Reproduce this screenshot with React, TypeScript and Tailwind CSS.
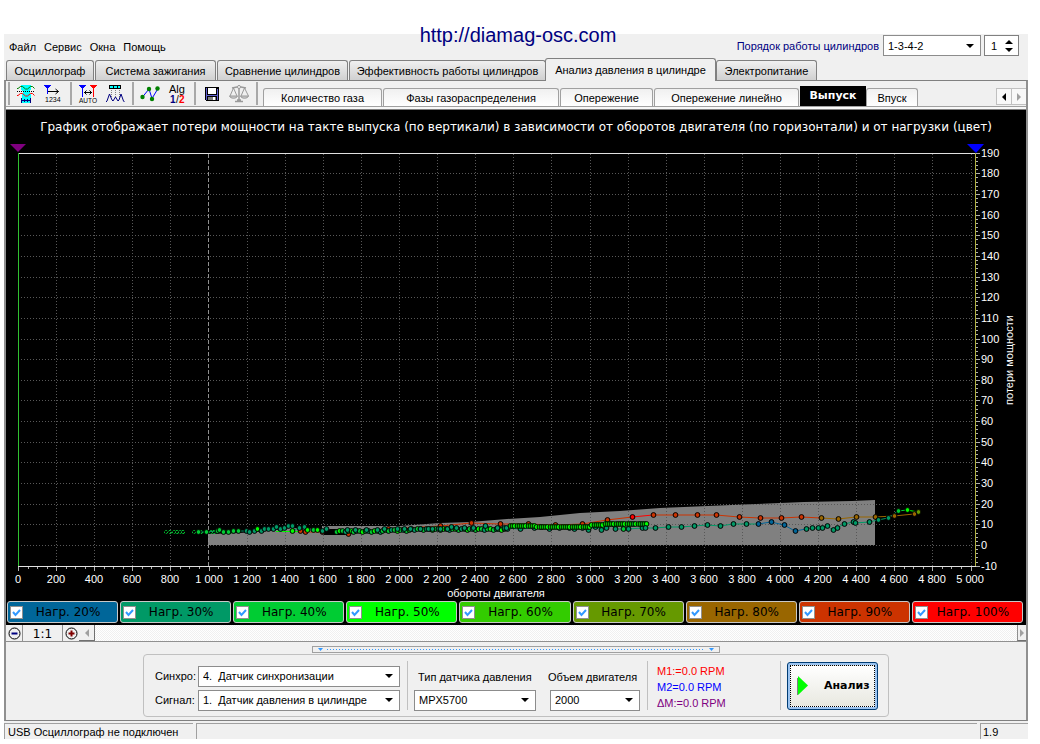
import React, { useState } from "react";

const MENU = ["Файл", "Сервис", "Окна", "Помощь"];

const TABS = [
  { label: "Осциллограф", width: "w-[88px]" },
  { label: "Система зажигания", width: "w-[121px]" },
  { label: "Сравнение цилиндров", width: "w-[131px]" },
  { label: "Эффективность работы цилиндров", width: "w-[197px]" },
  { label: "Анализ давления в цилиндре", width: "w-[171px]", active: true },
  { label: "Электропитание", width: "w-[101px]" },
];

const SUB_TABS = [
  { label: "Количество газа", width: "w-[119px]" },
  { label: "Фазы газораспределения", width: "w-[176px]" },
  { label: "Опережение", width: "w-[93px]" },
  { label: "Опережение линейно", width: "w-[145px]" },
  { label: "Выпуск", width: "w-[66px]", active: true },
  { label: "Впуск", width: "w-[52px]" },
];

const LOADS = [
  { label: "Нагр. 20%", color: "bg-[#006699]" },
  { label: "Нагр. 30%", color: "bg-[#009966]" },
  { label: "Нагр. 40%", color: "bg-[#00cc33]" },
  { label: "Нагр. 50%", color: "bg-[#00ff00]" },
  { label: "Нагр. 60%", color: "bg-[#33cc00]" },
  { label: "Нагр. 70%", color: "bg-[#669900]" },
  { label: "Нагр. 80%", color: "bg-[#996600]" },
  { label: "Нагр. 90%", color: "bg-[#cc3300]" },
  { label: "Нагр. 100%", color: "bg-[#ff0000]" },
];

/* ---------- toolbar icons ---------- */

function SyncIcon() {
  return (
    <svg width="20" height="20" viewBox="0 0 20 20" fill="none">
      <path d="M5 1h10v4l-1 3 1 4v7H6v-7l1-4-2-3z" fill="#00ffff" shapeRendering="crispEdges" />
      <path d="M1 4.500h1l2.500-2h2l3 2.500h2l3-2.500h2l2 2" stroke="#008000" />
      <path d="M1 11.500h1l2.500-2h2l3 2.500h2l3-2.500h2l2 2" stroke="#ff0000" />
      <path d="M1 7.500h18" stroke="#000" strokeDasharray="1 1" shapeRendering="crispEdges" />
      <path d="M5.500 14v5M14.500 14v5M6 16.500h8M8.500 15v3M11.500 15v3" stroke="#000080" shapeRendering="crispEdges" />
    </svg>
  );
}

function NumberIcon() {
  return (
    <svg width="20" height="20" viewBox="0 0 20 20" fill="none">
      <path d="M1 1h7L5 5v5H4V5z" fill="#0000ff" shapeRendering="crispEdges" />
      <path d="M5 7.500h10.500M12.500 5l3 2.500-3 2.500" stroke="#000" />
      <text x="2" y="18" fontSize="7" fill="#000" fontFamily="Liberation Sans, sans-serif">1234</text>
    </svg>
  );
}

function AutoIcon() {
  return (
    <svg width="20" height="20" viewBox="0 0 20 20" fill="none">
      <path d="M1 1h7L5 5v8H4V5z" fill="#0000ff" shapeRendering="crispEdges" />
      <path d="M12 1h7l-3 4v8h-1V5z" fill="#ff0000" shapeRendering="crispEdges" />
      <path d="M6 8.500h8M8.500 6.500l-2 2 2 2M11.500 6.500l2 2-2 2" stroke="#000" />
      <text x="1" y="19" fontSize="6.500" fill="#000" fontFamily="Liberation Sans, sans-serif">AUTO</text>
    </svg>
  );
}

function PulseIcon() {
  return (
    <svg width="20" height="20" viewBox="0 0 20 20" fill="none">
      <path d="M4.500 1.500h11v3h-11z" fill="#00ffff" stroke="#000" shapeRendering="crispEdges" />
      <path d="M8.500 2v2M12.500 2v2" stroke="#000" shapeRendering="crispEdges" />
      <path d="M6.500 6v7M10.500 6v7M14.500 6v7" stroke="#808080" strokeDasharray="1 1" />
      <path d="M1 18l1-1 2.500-7L7 16l1 1 2.500-4 2.500 4 1-1 2-6 2.500 7 1 1" stroke="#000080" />
    </svg>
  );
}

function TrendIcon() {
  return (
    <svg width="20" height="20" viewBox="0 0 20 20">
      <path d="M2.500 13L9 5l3 9.500 6-10" fill="none" stroke="#0000ff" />
      <circle cx="2.500" cy="13" r="2.200" fill="#008000" />
      <circle cx="9" cy="5" r="2.200" fill="#008000" />
      <circle cx="12" cy="15" r="2.200" fill="#008000" />
      <circle cx="17.500" cy="4.500" r="2.200" fill="#008000" />
    </svg>
  );
}

function AlgIcon() {
  return (
    <svg width="20" height="22" viewBox="0 0 20 22" fontFamily="Liberation Sans, sans-serif">
      <text x="2" y="10" fontSize="11" fill="#000">Alg</text>
      <text x="3" y="20" fontSize="10" fontWeight="bold" fill="#000080">1</text>
      <text x="9" y="20" fontSize="10" fill="#000">/</text>
      <text x="12" y="20" fontSize="10" fontWeight="bold" fill="#ff0000">2</text>
    </svg>
  );
}

function SaveIcon() {
  return (
    <svg width="16" height="16" viewBox="0 0 16 16" shapeRendering="crispEdges">
      <path d="M1 1h14v14H2l-1-1z" fill="#000" />
      <path d="M2 2h1v12H2zM13 3h1v11h-1zM3 9h10v1H3z" fill="#6060d0" />
      <path d="M4 2h8v6H4z" fill="#fff" />
      <path d="M4 11h8v3H4z" fill="#808080" />
      <path d="M9 11h2v3H9z" fill="#fff" />
    </svg>
  );
}

function ScalesIcon() {
  return (
    <svg width="20" height="20" viewBox="0 0 20 20" fill="none" stroke="#9a9a9a">
      <path d="M10 1v15M3 4l5-1h4l5 1M6 17.500h8M8 16h4" strokeWidth="1.500" />
      <path d="M4.500 4L1 12M4.500 4L8 12M15.500 4L12 12M15.500 4l4 8" />
      <path d="M.5 12h8c-1 3-7 3-8 0zM11.500 12h8c-1 3-7 3-8 0z" fill="#c8c8c8" />
      <circle cx="10" cy="3" r="1.500" fill="#fff" />
    </svg>
  );
}

const TOOL_GROUPS = [
  [
    { name: "Синхронизация", icon: <SyncIcon /> },
    { name: "Нумерация", icon: <NumberIcon /> },
  ],
  [
    { name: "Авто", icon: <AutoIcon /> },
    { name: "Импульсы", icon: <PulseIcon /> },
  ],
  [
    { name: "Тренд", icon: <TrendIcon /> },
    { name: "Алгоритм", icon: <AlgIcon /> },
  ],
  [
    { name: "Сохранить", icon: <SaveIcon /> },
    { name: "Сравнить", icon: <ScalesIcon /> },
  ],
];

/* ---------- chart ---------- */

const C20 = "#006699";
const C30 = "#009966";
const C40 = "#00cc33";
const C50 = "#00ff00";
const C70 = "#669900";
const C80 = "#996600";
const C90 = "#cc3300";
const C100 = "#ff0000";

type Dot = [number, number, string];

const px = (rpm: number) => Math.round(18 + rpm * 0.1905);
const py = (loss: number) => Math.round(545 - loss * 2.065);
const spaced = (n: number) => (n >= 1000 ? `${Math.floor(n / 1000)} ${String(n % 1000).padStart(3, "0")}` : String(n));

const RPM = Array.from({ length: 26 }, (_, i) => i * 200);
const LOSS = Array.from({ length: 21 }, (_, i) => i * 10 - 10);

const HIGH: Dot[] = [
  [300, 531, C90], [305, 532, C90], [322, 532, C90], [348, 534, C90], [388, 529, C90], [440, 526, C90],
  [471, 523, C90], [500, 524, C90], [528, 524, C90], [555, 525, C90], [582, 524, C90], [607, 520, C90],
  [632, 517, C100], [653, 515, C90], [675, 515, C90], [697, 515, C90], [716, 515, C90], [739, 517, C90],
  [760, 518, C90], [781, 518, C90], [801, 517, C90], [821, 518, C80], [838, 519, C80], [856, 517, C80],
  [875, 517, C80], [894, 516, C80], [914, 514, C80], [918, 512, C70],
];

const LOW: Dot[] = [
  [645, 528, C30], [655, 528, C30], [668, 527, C30], [681, 527, C30], [694, 526, C30], [707, 525, C30],
  [720, 526, C30], [733, 524, C30], [746, 524, C30], [758, 524, C20], [771, 522, C20], [784, 525, C20],
  [795, 531, C20], [806, 529, C30], [812, 528, C30], [818, 528, C30], [822, 528, C30], [827, 526, C30],
  [833, 530, C30], [837, 528, C30], [844, 524, C30], [853, 522, C30], [855, 523, C30], [869, 522, C30],
  [878, 520, C30], [888, 518, C30], [898, 511, C40], [907, 510, C50], [918, 512, C70],
];

const START: Dot[] = [
  [198, 532, C40], [206, 532, C40], [217, 531, C40], [219, 530, C40], [223, 532, C40], [228, 532, C40],
  [233, 531, C40], [238, 531, C40], [246, 531, C30], [249, 532, C30], [254, 531, C30], [257, 529, C50],
  [261, 531, C30], [264, 529, C30], [268, 529, C30], [273, 529, C30], [276, 527, C30], [280, 529, C30],
  [284, 528, C30], [288, 526, C30], [292, 526, C30], [292, 531, C50], [299, 528, C30], [304, 527, C30],
  [307, 530, C50], [313, 530, C40], [317, 530, C50], [322, 531, C30], [326, 529, C30],
];

const SPARSE = [166, 170, 174, 177, 180, 183, 194, 201, 211, 214, 226, 230];

const TEAL: Dot[] = [
  347, 355, 366, 377, 384, 397, 404, 410, 420, 428, 432, 440, 447, 451, 456, 464, 473, 485, 497, 504,
].map((x, i) => [x, Math.round(530 - (x - 347) * 0.014) - (x > 430 && i % 4 === 1 ? 2 : 0), C30] as Dot);

const TEAL_LOW: Dot[] = [
  [506, 528, C30], [520, 529, C30], [534, 528, C30], [541, 527, C30], [549, 529, C30], [559, 528, C30],
  [569, 528, C30], [574, 529, C30], [582, 528, C30], [588, 530, C30], [595, 527, C30], [601, 530, C30],
  [606, 528, C30], [614, 525, C30], [615, 529, C30], [623, 529, C40], [628, 529, C30], [642, 528, C30],
];

const BAND: Dot[] = Array.from({ length: 60 }, (_, i) => {
  const x = 336 + Math.round(i * 2.9);
  const y = x < 385 ? 531 : x < 410 ? 530 : 529;
  return [x, y + (i % 3 === 0 ? 1 : 0), i % 4 === 1 ? C50 : i % 4 === 3 ? C30 : C40] as Dot;
});

const DENSE: Dot[] = Array.from({ length: 63 }, (_, i) => {
  const x = 510 + Math.round(i * 2.2);
  const y = x < 535 ? 526 : x < 560 ? 527 : x < 590 ? 527 : x < 605 ? 525 : 524;
  return [x, y, x > 624 && i % 4 === 0 ? C40 : C50] as Dot;
});

const line = (dots: Dot[]) => dots.map(([x, y]) => `${x},${y}`).join(" ");

const colored = (dots: Dot[], key: string) =>
  dots.slice(1).map((d, i) => (
    <line key={`${key}${i}`} x1={dots[i][0]} y1={dots[i][1]} x2={d[0]} y2={d[1]} stroke={dots[i][2]} />
  ));

function Dots({ dots }: { dots: Dot[] }) {
  return (
    <>
      {dots.map(([x, y, color], i) => (
        <circle key={i} cx={x + 0.5} cy={y} r="2.400" fill={color} stroke="#000" strokeWidth="1" />
      ))}
    </>
  );
}

function Chart() {
  return (
    <svg
      viewBox="6 140 1020 460"
      className="block h-auto w-full"
      role="img"
      aria-label="Потери мощности от оборотов двигателя"
      fontFamily="Liberation Sans, Arial, sans-serif"
      fontSize="11"
    >
      <path
        d="M208 545V534L240 533L268 531L290 528L322 529V526H400L440 523L470 522L507 519L540 517L580 513L620 511L660 508L708 506L756 504L804 502L852 501L875 500V545Z"
        fill="#808080"
      />
      <g stroke="#585858" strokeDasharray="1 2" shapeRendering="crispEdges">
        {RPM.slice(1).filter((v) => v !== 1000).map((v) => (
          <line key={v} x1={px(v) + 0.5} x2={px(v) + 0.5} y1="154" y2="566" />
        ))}
        {LOSS.slice(1, -1).map((v) => (
          <line key={v} x1="18" x2="975" y1={py(v) + 0.5} y2={py(v) + 0.5} />
        ))}
      </g>
      <line x1="208.500" x2="208.500" y1="154" y2="566" stroke="#909090" strokeDasharray="4 2" shapeRendering="crispEdges" />

      <g shapeRendering="crispEdges" stroke="#e0e0e0">
        <path d="M18 153.500H980M18 566.500H980" />
        {Array.from({ length: 101 }, (_, i) => i * 50).map((v) => (
          <line key={v} x1={px(v) + 0.5} x2={px(v) + 0.5} y1="567" y2={v % 200 === 0 ? 571 : 569} stroke="#b0b0b0" />
        ))}
        {Array.from({ length: 101 }, (_, i) => i * 2 - 10).map((v) => (
          <line key={v} x1="976" x2={v % 10 === 0 ? 980 : 978} y1={py(v) + 0.5} y2={py(v) + 0.5} stroke="#b0b0b0" />
        ))}
      </g>
      <path d="M18.500 153V566" stroke="#30c030" shapeRendering="crispEdges" />
      <path d="M975.500 153V566" stroke="#b0b040" shapeRendering="crispEdges" />
      <path d="M10 144h16l-8 8z" fill="#800080" />
      <path d="M967 144h17l-8 9z" fill="#0000ff" />

      {colored(HIGH, "h")}
      {colored(LOW, "l")}
      <polyline points={line(START)} fill="none" stroke={C30} />
      <path d="M276 531.500H310" stroke={C50} />
      <path d="M324 531l6-2h8l8 2v4h-22z" fill="#000" />
      {SPARSE.map((x, i) => (
        <circle key={x} cx={x} cy="532" r="1.600" fill="none" stroke={C40} strokeWidth="1" strokeDasharray={i % 2 ? "3 2" : "2 1"} />
      ))}
      <Dots dots={HIGH} />
      <Dots dots={START} />
      <Dots dots={BAND} />
      <Dots dots={TEAL} />
      <polyline points={line(TEAL_LOW)} fill="none" stroke={C30} />
      <Dots dots={TEAL_LOW} />
      <Dots dots={DENSE} />
      <Dots dots={LOW} />

      <g fill="#fff">
        {RPM.map((v) => (
          <text key={v} x={px(v) - (v === 5000 ? 1 : 0)} y="583" textAnchor="middle">
            {spaced(v)}
          </text>
        ))}
        {LOSS.map((v) => (
          <text key={v} x="981" y={py(v) + 4}>
            {v}
          </text>
        ))}
        <text x="496" y="597" textAnchor="middle">обороты двигателя</text>
        <text x="1013" y="360" textAnchor="middle" transform="rotate(-90 1013 360)">потери мощности</text>
      </g>
    </svg>
  );
}

/* ---------- controls ---------- */

function Dropdown({ id, value, className }: { id: string; value: string; className: string }) {
  return (
    <div className={`grid h-[21px] items-center border border-[#8c8c8c] bg-white ${className}`}>
      <select id={id} defaultValue={value} className="h-[19px] w-full appearance-none bg-transparent pr-4 pl-1 text-[11px] [grid-area:1/1]">
        <option value={value}>{value}</option>
      </select>
      <svg width="8" height="4" viewBox="0 0 8 4" className="pointer-events-none mr-[6px] justify-self-end [grid-area:1/1]">
        <path d="M0 0h8L4 4z" fill="#000" />
      </svg>
    </div>
  );
}

function LoadToggle({ label, color }: { label: string; color: string }) {
  const [on, setOn] = useState(true);
  return (
    <label className={`flex h-[22px] items-center rounded-[3px] border border-[#c8c8c8] pl-[2px] text-black ${color}`}>
      <span className="grid h-[13px] w-[13px] shrink-0 border border-[#909090] bg-white">
        <input type="checkbox" checked={on} onChange={() => setOn(!on)} className="h-full w-full appearance-none [grid-area:1/1]" />
        {on && (
          <svg viewBox="0 0 11 11" className="pointer-events-none h-[11px] w-[11px] [grid-area:1/1]">
            <path d="M2 5l2.500 3L9 3" fill="none" stroke="#3399ff" strokeWidth="2" />
          </svg>
        )}
      </span>
      <span className="grow pr-1 text-center font-['DejaVu_Sans',Verdana,sans-serif] text-xs leading-5 whitespace-nowrap">{label}</span>
    </label>
  );
}

export default function App() {
  return (
    <div className="relative min-h-screen bg-white pt-[34px] pr-3 pl-1 font-['Liberation_Sans',Arial,sans-serif] text-[11px] leading-4 text-black">
      <div className="pointer-events-none absolute inset-x-0 top-[23px] z-20 pr-1 text-center">
        <a href="http://diamag-osc.com" className="pointer-events-auto text-xl leading-6 text-[#000080]">
          http://diamag-osc.com
        </a>
      </div>
      <div className="bg-[#f0f0f0]">
        <header className="flex h-6 items-start justify-between pr-[9px] pl-[5px]">
          <nav className="flex gap-2 pt-[5px]">
            {MENU.map((m) => (
              <button key={m} type="button">{m}</button>
            ))}
          </nav>
          <div className="flex items-center pt-px">
            <label htmlFor="order" className="mr-1 text-[#000080]">Порядок работы цилиндров</label>
            <Dropdown id="order" value="1-3-4-2" className="mr-[3px] w-[98px]" />
            <div className="flex h-[21px] w-[35px] items-center border border-[#808080] bg-white">
              <input aria-label="Цилиндр" defaultValue="1" className="w-5 pl-[6px] text-[11px] outline-none" />
              <span className="flex flex-col gap-1">
                <button type="button" aria-label="Больше">
                  <svg width="8" height="4" viewBox="0 0 8 4" className="block"><path d="M0 4h8L4 0z" /></svg>
                </button>
                <button type="button" aria-label="Меньше">
                  <svg width="8" height="4" viewBox="0 0 8 4" className="block"><path d="M0 0h8L4 4z" /></svg>
                </button>
              </span>
            </div>
          </div>
        </header>

        <div role="tablist" className="flex h-[22px] items-end pl-[2px]">
          {TABS.map((t) => (
            <button
              key={t.label}
              type="button"
              role="tab"
              aria-selected={!!t.active}
              className={
                t.active
                  ? `relative z-10 -mb-px -ml-[2px] h-[23px] rounded-t-[3px] border border-b-0 border-[#808080] bg-[#f0f0f0] whitespace-nowrap ${t.width}`
                  : `mr-px h-5 rounded-t-[3px] border border-b-0 border-[#808080] bg-linear-to-b from-[#f0f0f0] to-[#d0d0d0] whitespace-nowrap ${t.width}`
              }
            >
              {t.label}
            </button>
          ))}
        </div>

        <main className="border-x-2 border-y border-x-[#909090] border-y-[#808080]">
          <div className="flex h-[25px] items-end">
            <div className="flex h-full shrink-0 items-center pl-[2px]">
              {TOOL_GROUPS.map((group, i) => (
                <div key={i} className="flex h-[23px] w-[62px] items-center border-l-2 border-[#a8a8a8] pl-[2px]">
                  {group.map((tool) => (
                    <button key={tool.name} type="button" title={tool.name} className="grid h-[22px] w-[27px] place-items-center">
                      {tool.icon}
                    </button>
                  ))}
                </div>
              ))}
              <div className="mr-[5px] h-[23px] border-l-2 border-[#a8a8a8]" />
            </div>
            <div role="tablist" className="flex h-full grow items-end">
              {SUB_TABS.map((t) => (
                <button
                  key={t.label}
                  type="button"
                  role="tab"
                  aria-selected={!!t.active}
                  className={
                    t.active
                      ? `h-[20px] bg-black font-['DejaVu_Sans',Verdana,sans-serif] font-bold text-white ${t.width}`
                      : `mr-px h-[18px] rounded-t-[3px] border border-b-0 border-[#a0a0a0] bg-linear-to-b from-[#f0f0f0] to-white whitespace-nowrap ${t.width}`
                  }
                >
                  {t.label}
                </button>
              ))}
            </div>
            <div className="mb-px flex h-[17px] w-[30px] shrink-0 border border-r-0 border-[#c0c0c0] bg-[#f8f8f8]">
              <button type="button" aria-label="Назад" className="grid grow place-items-center border-r border-[#c0c0c0]">
                <svg width="4" height="8" viewBox="0 0 4 8"><path d="M4 0v8L0 4z" /></svg>
              </button>
              <button type="button" aria-label="Вперёд" className="grid grow place-items-center">
                <svg width="4" height="8" viewBox="0 0 4 8"><path d="M0 0v8l4-4z" fill="#a0a0a0" /></svg>
              </button>
            </div>
          </div>
          <div className="h-1 border-t border-b border-t-[#a0a0a0] border-b-[#808080] bg-[#f8f8f8]" />

          <section className="bg-black">
            <h1 className="h-[30px] pt-2 text-center font-['DejaVu_Sans',Verdana,sans-serif] text-xs leading-[18px] whitespace-nowrap text-white">
              График отображает потери мощности на такте выпуска (по вертикали) в зависимости от оборотов двигателя (по горизонтали) и от нагрузки (цвет)
            </h1>
            <Chart />
            <div className="grid grid-cols-9 gap-[2px] pt-px pr-[3px] pb-[2px] pl-px">
              {LOADS.map((l) => (
                <LoadToggle key={l.label} {...l} />
              ))}
            </div>
          </section>

          <div className="flex h-[17px] border-b border-[#909090] bg-[repeating-conic-gradient(#f0f0f0_0_25%,#ffffff_0_50%)] bg-[length:2px_2px]">
            <button type="button" aria-label="Уменьшить" className="grid w-[17px] place-items-center border-r border-[#909090] bg-[#f0f0f0]">
              <svg width="13" height="13" viewBox="0 0 13 13" fill="none"><circle cx="6.500" cy="6.500" r="5.500" stroke="#000" /><path d="M3.500 6.500h6" stroke="#000080" strokeWidth="2" /></svg>
            </button>
            <button type="button" className="w-[40px] border-r border-[#909090] bg-[#f0f0f0] pt-px font-['DejaVu_Sans',Verdana,sans-serif] text-xs">1:1</button>
            <button type="button" aria-label="Увеличить" className="grid w-4 place-items-center bg-[#f0f0f0]">
              <svg width="13" height="13" viewBox="0 0 13 13" fill="none"><circle cx="6.500" cy="6.500" r="5.500" stroke="#000" /><path d="M3.500 6.500h6M6.500 3.500v6" stroke="#800000" strokeWidth="2" /></svg>
            </button>
            <button type="button" aria-label="Влево" className="grid w-4 place-items-center border-r border-b border-[#707070] bg-[#f0f0f0]">
              <svg width="4" height="8" viewBox="0 0 4 8"><path d="M4 0v8L0 4z" fill="#a0a0a0" /></svg>
            </button>
            <button type="button" aria-label="Вправо" className="ml-auto grid w-[9px] place-items-center border-b border-l border-[#909090] border-b-[#707070] bg-[#f0f0f0]">
              <svg width="4" height="8" viewBox="0 0 4 8"><path d="M0 0v8l4-4z" fill="#a0a0a0" /></svg>
            </button>
          </div>

          <div className="mx-auto mt-1 flex h-[7px] w-[408px] items-center gap-1 border border-[#a0a0a0] px-[5px]">
            <svg width="5" height="3" viewBox="0 0 5 3"><path d="M0 0h5L2.500 3z" fill="#3399ff" /></svg>
            <span className="h-px grow bg-[repeating-linear-gradient(90deg,#3399ff_0_1px,transparent_1px_3px)]" />
            <svg width="5" height="3" viewBox="0 0 5 3"><path d="M0 0h5L2.500 3z" fill="#3399ff" /></svg>
          </div>

          <section className="mx-auto mt-px mb-[3px] flex h-[63px] w-[746px] items-center rounded-[4px] border border-[#c0c0c0] pl-[11px]">
            <div className="grid w-[245px] grid-cols-[43px_202px] items-center gap-y-[3px] pt-[5px]">
              <label htmlFor="sync">Синхро:</label>
              <Dropdown id="sync" value={"4.\u00a0\u00a0Датчик синхронизации"} className="w-[202px]" />
              <label htmlFor="signal">Сигнал:</label>
              <Dropdown id="signal" value={"1.\u00a0\u00a0Датчик давления в цилиндре"} className="w-[202px]" />
            </div>
            <div className="ml-[7px] h-[49px] border-l border-[#c0c0c0]" />
            <div className="ml-[6px] w-[122px] pt-[5px]">
              <label htmlFor="sensor" className="mb-1 block h-5 pt-[3px] pl-1 whitespace-nowrap">Тип датчика давления</label>
              <Dropdown id="sensor" value="MPX5700" className="w-[122px]" />
            </div>
            <div className="ml-[12px] w-[92px] pt-[5px]">
              <label htmlFor="volume" className="mb-1 block h-5 pt-[3px] whitespace-nowrap">Объем двигателя</label>
              <Dropdown id="volume" value="2000" className="ml-[2px] w-[90px]" />
            </div>
            <div className="ml-[7px] h-[49px] border-l border-[#c0c0c0]" />
            <div className="ml-[9px] w-[123px] pt-[2px]">
              <p className="text-[#ff0000]">M1:=0.0 RPM</p>
              <p className="text-[#0000ff]">M2=0.0 RPM</p>
              <p className="text-[#800080]">ΔM:=0.0 RPM</p>
            </div>
            <div className="mr-[6px] h-[49px] border-l border-[#c0c0c0]" />
            <button type="button" className="h-[48px] w-[91px] rounded-[3px] border border-[#003c74] bg-[#9cc4f0] p-[2px]">
              <span className="flex h-full items-center gap-4 border border-dotted border-black bg-linear-to-b from-white to-[#e8e8e0] pl-[6px] font-['DejaVu_Sans',Verdana,sans-serif] font-bold">
                <svg width="11" height="20" viewBox="0 0 11 20" className="shrink-0"><path d="M1 0v19l10-9.500z" fill="#00ff00" /><path d="M.5 2v17" stroke="#808080" /></svg>
                Анализ
              </span>
            </button>
          </section>
        </main>

        <footer className="mt-[2px] flex h-4 gap-[3px]">
          <span className="w-[189px] border-t border-l border-[#a0a0a0] pl-[3px] leading-4 whitespace-nowrap">USB Осциллограф не подключен</span>
          <span className="grow border-t border-l border-[#a0a0a0]" />
          <span className="w-[48px] border-t border-l border-[#a0a0a0] pl-[2px] leading-4">1.9</span>
        </footer>
      </div>
    </div>
  );
}
